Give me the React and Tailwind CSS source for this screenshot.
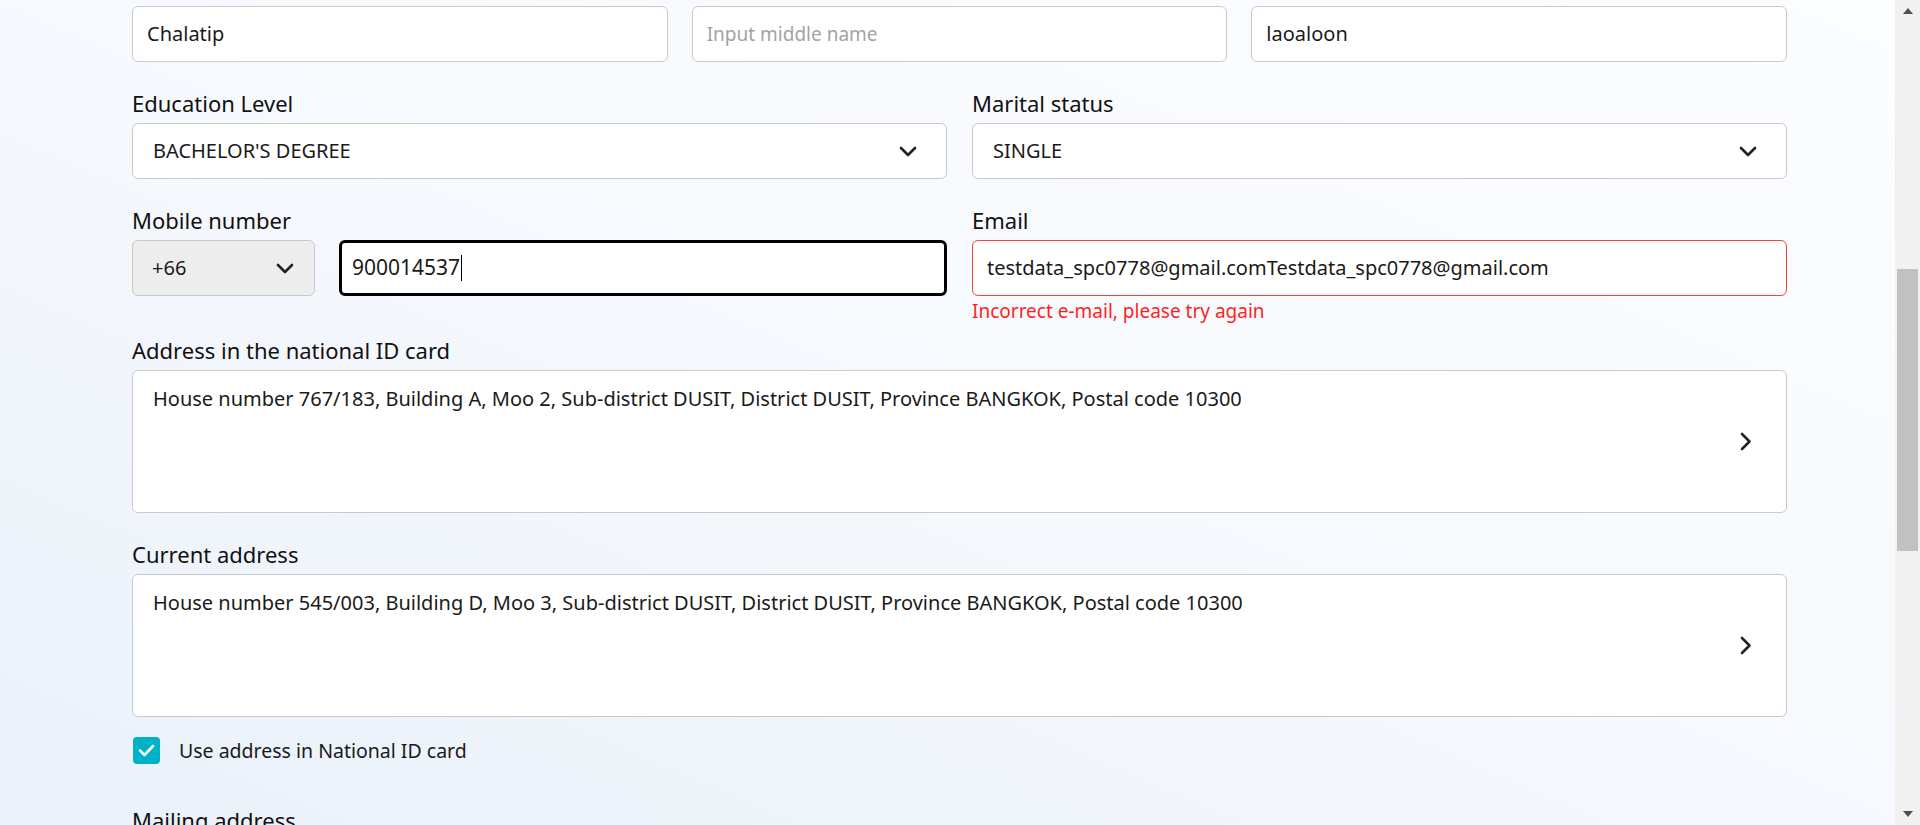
const font = { fontFamily: '"Noto Sans", "Open Sans", sans-serif' };

function ChevronDown() {
  return (
    <svg width="18" height="11" viewBox="0 0 18 11" fill="none">
      <path d="M2 2 L9 9 L16 2" stroke="#222" strokeWidth="2.6" strokeLinecap="round" strokeLinejoin="round" />
    </svg>
  );
}

function ChevronRight() {
  return (
    <svg width="12" height="19" viewBox="0 0 12 19" fill="none">
      <path d="M2 2 L9.5 9.5 L2 17" stroke="#222" strokeWidth="2.6" strokeLinecap="round" strokeLinejoin="round" />
    </svg>
  );
}

function Label({ children, className = "" }) {
  return <div className={`text-[22px] leading-[28px] text-[#111] mb-[6px] ${className}`}>{children}</div>;
}

function TextBox({ value, placeholder }) {
  return (
    <div className="h-[56px] flex-1 bg-white border border-[#c9c9c9] rounded-md px-[14px] flex items-center">
      {value ? (
        <span className="text-[20px] text-[#1a1a1a]">{value}</span>
      ) : (
        <span className="text-[19px] text-[#a3a3a3]">{placeholder}</span>
      )}
    </div>
  );
}

function Select({ value }) {
  return (
    <div className="h-[56px] bg-white border border-[#c9c9c9] rounded-md pl-[20px] pr-[29px] flex items-center justify-between text-[20px] text-[#1a1a1a]">
      <span>{value}</span>
      <ChevronDown />
    </div>
  );
}

function AddressBox({ text }) {
  return (
    <div className="h-[143px] bg-white border border-[#c9c9c9] rounded-md pl-[20px] pr-[34px] pt-[14px] flex justify-between text-[20px] leading-[28px] text-[#1a1a1a]">
      <span>{text}</span>
      <div className="self-center -mt-[14px]">
        <ChevronRight />
      </div>
    </div>
  );
}

export default function App() {
  return (
    <div className="h-screen w-full overflow-hidden flex bg-linear-to-bl from-[#fcfdff] via-[#f6f9fd] to-[#eaf1fa]" style={font}>
      <div className="flex-1 pl-[132px] pt-[6px]">
        <div className="w-[1655px] flex flex-col">
          <div className="flex gap-[24px]">
            <TextBox value="Chalatip" />
            <TextBox placeholder="Input middle name" />
            <TextBox value="laoaloon" />
          </div>

          <div className="grid grid-cols-2 gap-x-[25px] mt-[27px]">
            <div>
              <Label>Education Level</Label>
              <Select value="BACHELOR'S DEGREE" />
            </div>
            <div>
              <Label>Marital status</Label>
              <Select value="SINGLE" />
            </div>
          </div>

          <div className="grid grid-cols-2 gap-x-[25px] mt-[27px]">
            <div>
              <Label>Mobile number</Label>
              <div className="flex gap-[24px]">
                <div className="w-[183px] h-[56px] bg-[#ededed] border border-[#c9c9c9] rounded-md pl-[19px] pr-[20px] flex items-center justify-between text-[20px] text-[#1a1a1a]">
                  <span>+66</span>
                  <ChevronDown />
                </div>
                <div className="flex-1 h-[56px] bg-white border-[3px] border-black rounded-md px-[10px] flex items-center text-[21px] text-[#1a1a1a]">
                  <span>900014537</span>
                  <span className="inline-block w-px h-[26px] bg-black ml-px" />
                </div>
              </div>
            </div>
            <div>
              <Label>Email</Label>
              <div className="h-[56px] bg-white border border-[#f44336] rounded-md px-[14px] flex items-center text-[20px] text-[#1a1a1a]">
                testdata_spc0778@gmail.comTestdata_spc0778@gmail.com
              </div>
              <div className="text-[19px] leading-[24px] text-[#ff1f1f] mt-[3px]">Incorrect e-mail, please try again</div>
            </div>
          </div>

          <Label className="mt-[13px]">Address in the national ID card</Label>
          <AddressBox text="House number 767/183, Building A, Moo 2, Sub-district DUSIT, District DUSIT, Province BANGKOK, Postal code 10300" />

          <Label className="mt-[27px]">Current address</Label>
          <AddressBox text="House number 545/003, Building D, Moo 3, Sub-district DUSIT, District DUSIT, Province BANGKOK, Postal code 10300" />

          <div className="flex items-center gap-[19px] mt-[19px] ml-px">
            <div className="w-[27px] h-[27px] rounded-[4px] bg-[#00b2c8] flex items-center justify-center">
              <svg width="17" height="13" viewBox="0 0 17 13" fill="none">
                <path d="M2 6.5 L6.5 11 L15 2" stroke="white" strokeWidth="2.6" strokeLinecap="round" strokeLinejoin="round" />
              </svg>
            </div>
            <span className="text-[19.5px] text-[#1a1a1a]">Use address in National ID card</span>
          </div>

          <Label className="mt-[41px]">Mailing address</Label>
        </div>
      </div>

      <div className="w-[25px] h-full bg-[#f1f1f1] flex flex-col items-center">
        <div className="h-[22px] flex items-center justify-center">
          <svg width="10" height="6" viewBox="0 0 10 6"><path d="M0 6 L5 0 L10 6 Z" fill="#505050" /></svg>
        </div>
        <div className="flex-1 w-full px-[2px]">
          <div className="mt-[247px] h-[282px] bg-[#c1c1c1]" />
        </div>
        <div className="h-[22px] flex items-center justify-center">
          <svg width="10" height="6" viewBox="0 0 10 6"><path d="M0 0 L5 6 L10 0 Z" fill="#505050" /></svg>
        </div>
      </div>
    </div>
  );
}
